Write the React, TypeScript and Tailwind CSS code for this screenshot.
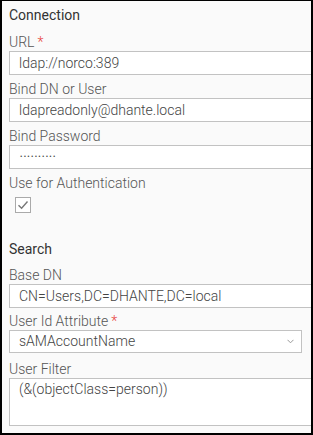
import React from 'react';

const Label: React.FC<{ text: string; required?: boolean; className?: string }> = ({ text, required, className }) => (
  <div className={`h-[17px] leading-[17px] text-[14px] font-light text-[#555] ${className ?? ''}`}>
    {text}
    {required && <span className="ml-[3px] text-[#e8413c]">*</span>}
  </div>
);

const TextBox: React.FC<{ value: string }> = ({ value }) => (
  <div className="h-[24px] w-[320px] border border-[#c2c2c2] bg-white pl-[9px] text-[14px] leading-[22px] font-light text-[#444] whitespace-nowrap">
    {value}
  </div>
);

const App: React.FC = () => {
  return (
    <div
      className="h-[435px] w-[313px] overflow-hidden border-t border-l-2 border-r-2 border-b-2 border-black bg-[#fafafa] pl-[7px]"
      style={{ fontFamily: 'Roboto, "Liberation Sans", sans-serif' }}
    >
      <div className="mt-[4px] h-[20px] leading-[20px] text-[14px] text-[#333]">Connection</div>

      <Label text="URL" required className="mt-[9px]" />
      <TextBox value="ldap://norco:389" />

      <Label text="Bind DN or User" className="mt-[6px]" />
      <TextBox value="ldapreadonly@dhante.local" />

      <Label text="Bind Password" className="mt-[6px]" />
      <div className="flex h-[24px] w-[320px] items-center border border-[#c2c2c2] bg-white pl-[10px] text-[7px] tracking-[1.3px] text-[#444]">
        ••••••••••
      </div>

      <Label text="Use for Authentication" className="mt-[6px]" />
      <div className="ml-[6px] mt-[5px] flex h-[16px] w-[16px] items-center justify-center border border-[#aaa] bg-white">
        <svg width="12" height="10" viewBox="0 0 12 10">
          <path d="M1.5 5.2 L4.6 8.2 L10.5 1.5" fill="none" stroke="#777" strokeWidth="1.4" />
        </svg>
      </div>

      <div className="mt-[26px] h-[20px] leading-[20px] text-[14px] text-[#333]">Search</div>

      <Label text="Base DN" className="mt-[8px]" />
      <TextBox value="CN=Users,DC=DHANTE,DC=local" />

      <Label text="User Id Attribute" required className="mt-[5px]" />
      <div className="flex h-[23px] w-[293px] items-center justify-between border border-[#c2c2c2] bg-white pl-[9px] pr-[7px] text-[14px] font-light text-[#444]">
        <span>sAMAccountName</span>
        <svg width="7" height="5" viewBox="0 0 7 5">
          <path d="M0.5 0.8 L3.5 3.8 L6.5 0.8" fill="none" stroke="#999" strokeWidth="1" />
        </svg>
      </div>

      <Label text="User Filter" className="mt-[8px]" />
      <div className="h-[48px] w-[320px] border border-[#c2c2c2] bg-white pl-[9px] text-[14px] leading-[20px] font-light text-[#444]">
        (&amp;(objectClass=person))
      </div>
    </div>
  );
};

export default App;
